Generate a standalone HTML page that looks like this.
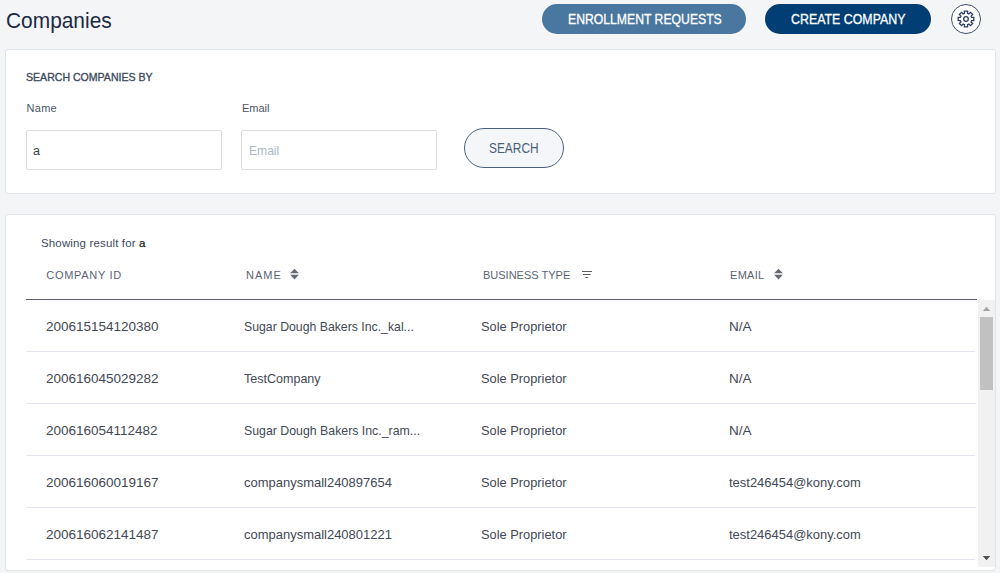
<!DOCTYPE html>
<html><head><meta charset="utf-8">
<style>
*{margin:0;padding:0;box-sizing:border-box}
html,body{width:1000px;height:573px;overflow:hidden;background:#f4f5f7;font-family:"Liberation Sans",sans-serif;position:relative}
.a{position:absolute;white-space:nowrap;line-height:1}
.sx{display:inline-block;transform-origin:0 50%}
.title{left:5.8px;top:9.5px;font-size:22px;color:#1b2a44}
.btn{position:absolute;top:4px;height:30px;border-radius:15px;background:#4a77a0}
.btn .a{color:#fff;font-size:14px;top:9px;-webkit-text-stroke:0.3px #fff}
.enr{left:542px;width:204px;background:#4a77a0}
.cre{left:765px;width:166px;background:#003e74}
.gear{position:absolute;left:951px;top:4px;width:30px;height:30px;border:1px solid #3e4f69;border-radius:50%;background:#fff}
.panel{position:absolute;left:5px;width:991px;background:#fff;border:1px solid #dfe3ec;border-radius:3px}
.p1{top:49px;height:145px}
.p2{top:214px;height:357px}
.lbl{font-size:11px;color:#3b4a60}
.inp{position:absolute;top:130px;width:196px;height:40px;border:1px solid #dddddd;border-radius:2px;background:#fff}
.sbtn{position:absolute;left:464px;top:128px;width:100px;height:40px;border:1px solid #4b5f7d;border-radius:20px;background:#f5f6f9}
.hdr{font-size:11px;color:#5b6475}
.cell{font-size:13.5px;color:#424854}
.num{}
.div{position:absolute;left:26px;width:949px;height:1px;background:#e3e6ee}
</style></head><body>
<div class="a title"><span class="sx" style="transform:scaleX(0.95)">Companies</span></div>
<div class="btn enr"><div class="a" style="left:25.6px;top:8px"><span class="sx" style="transform:scaleX(0.872)">ENROLLMENT REQUESTS</span></div></div>
<div class="btn cre"><div class="a" style="left:25.8px;top:8px"><span class="sx" style="transform:scaleX(0.885)">CREATE COMPANY</span></div></div>
<div class="gear"></div>
<svg style="position:absolute;left:954px;top:7.3px" width="24" height="24" viewBox="0 0 24 24"><path d="M10.45 6.41 L10.41 4.16 L13.59 4.16 L13.55 6.41 L14.86 6.95 L16.42 5.33 L18.67 7.58 L17.05 9.14 L17.59 10.45 L19.84 10.41 L19.84 13.59 L17.59 13.55 L17.05 14.86 L18.67 16.42 L16.42 18.67 L14.86 17.05 L13.55 17.59 L13.59 19.84 L10.41 19.84 L10.45 17.59 L9.14 17.05 L7.58 18.67 L5.33 16.42 L6.95 14.86 L6.41 13.55 L4.16 13.59 L4.16 10.41 L6.41 10.45 L6.95 9.14 L5.33 7.58 L7.58 5.33 L9.14 6.95 Z" fill="none" stroke="#2b3f63" stroke-width="1.3" stroke-linejoin="miter"/><circle cx="12" cy="12" r="2.3" fill="none" stroke="#2b3f63" stroke-width="1.3"/></svg>

<div class="panel p1"></div>
<div class="a lbl" style="left:26px;top:72px;-webkit-text-stroke:0.35px #3b4a60"><span class="sx" style="transform:scaleX(0.96)">SEARCH COMPANIES BY</span></div>
<div class="a lbl" style="left:26.5px;top:103px;letter-spacing:0.3px;color:#4a5568">Name</div>
<div class="a lbl" style="left:242px;top:103px;color:#4a5568">Email</div>
<div class="inp" style="left:26px"></div>
<div class="inp" style="left:241px"></div>
<div class="a" style="left:33px;top:145px;font-size:12.5px;color:#333a44">a</div>
<div class="a" style="left:248.5px;top:143.5px;font-size:13px;color:#a9b6c8"><span class="sx" style="transform:scaleX(0.93)">Email</span></div>
<div class="sbtn"></div>
<div class="a" style="left:489px;top:141px;font-size:14px;color:#4b5e78"><span class="sx" style="transform:scaleX(0.85)">SEARCH</span></div>

<div class="panel p2"></div>
<div class="a lbl" style="left:41px;top:238px;font-size:11.5px;letter-spacing:0.15px;color:#3b4a60">Showing result for <span style="color:#1a1d24;-webkit-text-stroke:0.25px #1a1d24">a</span></div>
<div class="a hdr" style="left:46.3px;top:270px;letter-spacing:0.7px">COMPANY ID</div>
<div class="a hdr" style="left:246px;top:270px;letter-spacing:1px">NAME</div>
<svg style="position:absolute;left:290px;top:268px" width="10" height="13" viewBox="0 0 10 13"><path d="M0.1 5.3 L4.5 0.8 L8.9 5.3 Z M0.1 6.7 L4.5 11.6 L8.9 6.7 Z" fill="#656a73"/></svg>
<div class="a hdr" style="left:483px;top:270px">BUSINESS TYPE</div>
<svg style="position:absolute;left:581px;top:270px" width="12" height="9" viewBox="0 0 12 9"><path d="M1 1.5 H11 M2 4.5 H9.6 M4.5 7.5 H7.2" stroke="#5a5f6a" stroke-width="1.1"/></svg>
<div class="a hdr" style="left:730px;top:270px;letter-spacing:0.3px">EMAIL</div>
<svg style="position:absolute;left:774px;top:268px" width="10" height="13" viewBox="0 0 10 13"><path d="M0.1 5.3 L4.5 0.8 L8.9 5.3 Z M0.1 6.7 L4.5 11.6 L8.9 6.7 Z" fill="#656a73"/></svg>
<div style="position:absolute;left:26px;top:299px;width:951px;height:1px;background:#5a5e66"></div>

<div class="a cell" style="left:46px;top:319.5px"><span class="sx" style="transform:scaleX(1)">200615154120380</span></div>
<div class="a cell" style="left:244px;top:319.5px"><span class="sx" style="transform:scaleX(0.909)">Sugar Dough Bakers Inc._kal...</span></div>
<div class="a cell" style="left:481px;top:319.5px"><span class="sx" style="transform:scaleX(0.95)">Sole Proprietor</span></div>
<div class="a cell" style="left:729px;top:319.5px"><span class="sx" style="transform:scaleX(1)">N/A</span></div>
<div class="div" style="top:351px"></div>

<div class="a cell" style="left:46px;top:371.5px"><span class="sx" style="transform:scaleX(1)">200616045029282</span></div>
<div class="a cell" style="left:244px;top:371.5px"><span class="sx" style="transform:scaleX(0.928)">TestCompany</span></div>
<div class="a cell" style="left:481px;top:371.5px"><span class="sx" style="transform:scaleX(0.95)">Sole Proprietor</span></div>
<div class="a cell" style="left:729px;top:371.5px"><span class="sx" style="transform:scaleX(1)">N/A</span></div>
<div class="div" style="top:403px"></div>

<div class="a cell" style="left:46px;top:423.5px"><span class="sx" style="transform:scaleX(1)">200616054112482</span></div>
<div class="a cell" style="left:244px;top:423.5px"><span class="sx" style="transform:scaleX(0.913)">Sugar Dough Bakers Inc._ram...</span></div>
<div class="a cell" style="left:481px;top:423.5px"><span class="sx" style="transform:scaleX(0.95)">Sole Proprietor</span></div>
<div class="a cell" style="left:729px;top:423.5px"><span class="sx" style="transform:scaleX(1)">N/A</span></div>
<div class="div" style="top:455px"></div>

<div class="a cell" style="left:46px;top:475.5px"><span class="sx" style="transform:scaleX(1)">200616060019167</span></div>
<div class="a cell" style="left:244px;top:475.5px"><span class="sx" style="transform:scaleX(0.961)">companysmall240897654</span></div>
<div class="a cell" style="left:481px;top:475.5px"><span class="sx" style="transform:scaleX(0.95)">Sole Proprietor</span></div>
<div class="a cell" style="left:729px;top:475.5px"><span class="sx" style="transform:scaleX(0.96)">test246454@kony.com</span></div>
<div class="div" style="top:507px"></div>

<div class="a cell" style="left:46px;top:527.5px"><span class="sx" style="transform:scaleX(1)">200616062141487</span></div>
<div class="a cell" style="left:244px;top:527.5px"><span class="sx" style="transform:scaleX(0.961)">companysmall240801221</span></div>
<div class="a cell" style="left:481px;top:527.5px"><span class="sx" style="transform:scaleX(0.95)">Sole Proprietor</span></div>
<div class="a cell" style="left:729px;top:527.5px"><span class="sx" style="transform:scaleX(0.96)">test246454@kony.com</span></div>
<div class="div" style="top:559px"></div>

<div style="position:absolute;left:978px;top:300px;width:17px;height:267px;background:#f1f1f1"></div>
<div style="position:absolute;left:980px;top:317px;width:13px;height:73px;background:#c1c1c1"></div>
<svg style="position:absolute;left:982px;top:306px" width="9" height="6" viewBox="0 0 9 6"><path d="M0.8 5 L4.5 0.8 L8.2 5 Z" fill="#a3a3a3"/></svg>
<svg style="position:absolute;left:982px;top:555px" width="9" height="6" viewBox="0 0 9 6"><path d="M0.8 1 L4.5 5.2 L8.2 1 Z" fill="#505050"/></svg>
</body></html>
